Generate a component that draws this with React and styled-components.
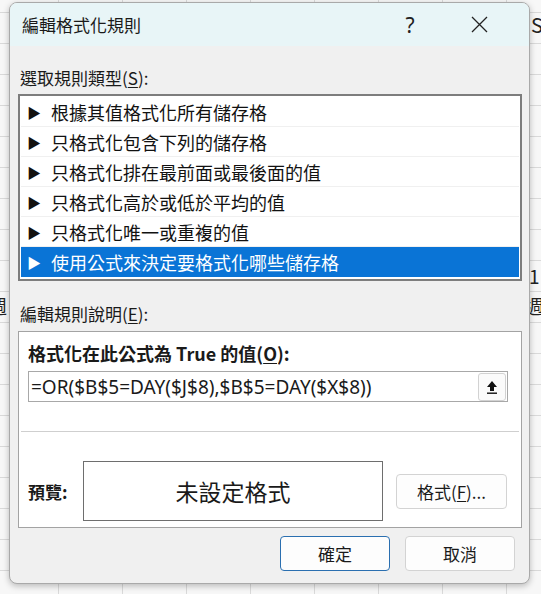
import React from "react";
import styled, { createGlobalStyle } from "styled-components";

const GlobalStyle = createGlobalStyle`
  * { box-sizing: border-box; }
  html, body { margin: 0; padding: 0; }
  body {
    font-family: "Noto Sans CJK TC", "Noto Sans", sans-serif;
    color: #1a1a1a;
    background: #f4f4f4;
  }
`;

const Sheet = styled.div`
  position: relative;
  width: 541px;
  height: 594px;
  overflow: hidden;
  background-color: #f7f7f7;
  background-image:
    linear-gradient(to right, #d9d9d9 1px, transparent 1px),
    linear-gradient(to bottom, #d9d9d9 1px, transparent 1px);
  background-size: 64px 31px;
  background-position: -6px 12px;
`;

const CellText = styled.span`
  position: absolute;
  left: ${(p) => p.x}px;
  top: ${(p) => p.y}px;
  font-size: ${(p) => p.size || 20}px;
  color: #222;
`;

const Dialog = styled.div`
  position: absolute;
  left: 9px;
  top: 2px;
  width: 521px;
  height: 582px;
  background: #f0f0f0;
  border: 1px solid #a9a9a9;
  border-radius: 8px;
  box-shadow: 0 2px 6px rgba(0, 0, 0, 0.25);
  overflow: hidden;
  display: flex;
  flex-direction: column;
`;

const TitleBar = styled.div`
  height: 43px;
  background: #e8f5f7;
  display: flex;
  align-items: center;
  padding-left: 12px;
`;

const Title = styled.div`
  flex: 1;
  font-size: 17px;
`;

const TitleButton = styled.div`
  width: ${(p) => p.w}px;
  height: 43px;
  display: flex;
  align-items: center;
  justify-content: center;
  font-family: "Noto Sans", sans-serif;
  font-size: 21px;
  color: #222;
`;

const Body = styled.div`
  flex: 1;
  display: flex;
  flex-direction: column;
  padding: 0 7px 0 8px;
`;

const SectionLabel = styled.div`
  font-size: 17px;
  height: 26px;
  display: flex;
  align-items: center;
  margin-top: ${(p) => p.mt}px;
  margin-bottom: ${(p) => p.mb}px;
  padding-left: 2px;
`;

const U = styled.span`
  text-decoration: underline;
  text-underline-offset: 2px;
`;

const List = styled.div`
  height: 187px;
  background: #fff;
  border: 2px solid #7d7d7d;
  padding: 1px;
  display: flex;
  flex-direction: column;
`;

const Item = styled.div`
  height: 30px;
  display: flex;
  align-items: center;
  font-size: 18px;
  padding-left: 6px;
  gap: 10px;
  color: ${(p) => (p.selected ? "#fff" : "#111")};
  background: ${(p) => (p.selected ? "#0a74d6" : "#fff")};
  border-bottom: ${(p) => (p.selected ? "none" : "1px solid #f0f0f0")};
`;

const Arrow = styled.span`
  font-size: 14px;
  width: 14px;
`;

const Panel = styled.div`
  height: 197px;
  background: #fff;
  border: 1px solid #a3a3a3;
  display: flex;
  flex-direction: column;
  padding: 9px 13px 0 9px;
`;

const BoldLabel = styled.div`
  font-size: 18px;
  font-weight: 700;
  height: 24px;
  display: flex;
  align-items: center;
`;

const FormulaBox = styled.div`
  margin-top: 6px;
  height: 31px;
  border: 1px solid #a8a8a8;
  display: flex;
  align-items: center;
  padding-left: 2px;
  padding-right: 1px;
`;

const FormulaText = styled.div`
  flex: 1;
  font-family: "Noto Sans", "Noto Sans CJK TC", sans-serif;
  font-size: 19px;
`;

const CollapseButton = styled.div`
  width: 28px;
  height: 28px;
  border: 1px solid #d2d2d2;
  border-radius: 3px;
  background: #fbfbfb;
  display: flex;
  align-items: center;
  justify-content: center;
`;

const Divider = styled.div`
  height: 1px;
  background: #cfcfcf;
  margin: 29px -11px 0 -7px;
`;

const PreviewRow = styled.div`
  display: flex;
  align-items: center;
  margin-top: 29px;
`;

const PreviewLabel = styled.div`
  width: 55px;
  font-size: 17px;
  font-weight: 700;
`;

const PreviewBox = styled.div`
  width: 300px;
  height: 60px;
  border: 1px solid #6e6e6e;
  display: flex;
  align-items: center;
  justify-content: center;
  font-size: 23px;
`;

const Button = styled.div`
  width: ${(p) => p.w || 110}px;
  height: 35px;
  display: flex;
  align-items: center;
  justify-content: center;
  font-size: 17px;
  background: #fdfdfd;
  border: 1px solid ${(p) => (p.primary ? "#2a6fb0" : "#d3d3d3")};
  border-radius: 4px;
  margin-left: ${(p) => p.ml || 0}px;
`;

const Footer = styled.div`
  display: flex;
  justify-content: flex-end;
  gap: 15px;
  padding: 8px 7px 0 0;
`;

export default function App() {
  const rules = [
    "根據其值格式化所有儲存格",
    "只格式化包含下列的儲存格",
    "只格式化排在最前面或最後面的值",
    "只格式化高於或低於平均的值",
    "只格式化唯一或重複的值",
    "使用公式來決定要格式化哪些儲存格",
  ];

  return (
    <>
      <GlobalStyle />
      <Sheet>
        <CellText x={531} y={10}>S</CellText>
        <CellText x={529} y={262} size={19}>1</CellText>
        <CellText x={525} y={292} size={19}>週</CellText>
        <CellText x={-12} y={292} size={19}>週</CellText>

        <Dialog>
          <TitleBar>
            <Title>編輯格式化規則</Title>
            <TitleButton w={38}>?</TitleButton>
            <TitleButton w={100}>
              <svg width="17" height="17" viewBox="0 0 17 17">
                <path d="M1 1L16 16M16 1L1 16" stroke="#222" strokeWidth="1.3" />
              </svg>
            </TitleButton>
          </TitleBar>

          <Body>
            <SectionLabel mt={18} mb={4}>
              選取規則類型(<U>S</U>):
            </SectionLabel>
            <List>
              {rules.map((r, i) => (
                <Item key={r} selected={i === rules.length - 1}>
                  <Arrow>▶</Arrow>
                  {r}
                </Item>
              ))}
            </List>

            <SectionLabel mt={19} mb={5}>
              編輯規則說明(<U>E</U>):
            </SectionLabel>
            <Panel>
              <BoldLabel>
                格式化在此公式為 True 的值(<U>O</U>):
              </BoldLabel>
              <FormulaBox>
                <FormulaText>=OR($B$5=DAY($J$8),$B$5=DAY($X$8))</FormulaText>
                <CollapseButton>
                  <svg width="14" height="16" viewBox="0 0 14 16">
                    <path d="M7 2L12 8H9V12H5V8H2Z" fill="#111" />
                    <rect x="2" y="13.5" width="10" height="1.4" fill="#111" />
                  </svg>
                </CollapseButton>
              </FormulaBox>
              <Divider />
              <PreviewRow>
                <PreviewLabel>預覽:</PreviewLabel>
                <PreviewBox>未設定格式</PreviewBox>
                <Button w={111} ml={13}>
                  格式(<U>F</U>)...
                </Button>
              </PreviewRow>
            </Panel>
            <Footer>
              <Button primary>確定</Button>
              <Button>取消</Button>
            </Footer>
          </Body>
        </Dialog>
      </Sheet>
    </>
  );
}
